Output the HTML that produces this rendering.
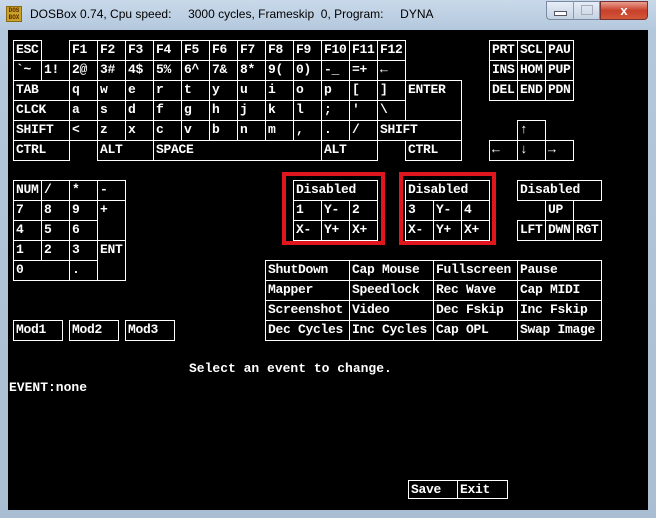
<!DOCTYPE html>
<html><head><meta charset="utf-8"><style>
body{margin:0;width:656px;height:518px;overflow:hidden;position:relative;background:linear-gradient(#c9d9ea,#b4c8dd 30px,#a9bdd3);font-family:"Liberation Sans",sans-serif}
#scr{position:absolute;left:8px;top:30px;width:640px;height:480px;background:#000}
.k{position:absolute;border:1px solid #fff;box-sizing:border-box;color:#fff;font:bold 13px "Liberation Mono",monospace;line-height:17px;padding-left:2px;white-space:nowrap;overflow:hidden;letter-spacing:-0.3px}
.t{position:absolute;color:#fff;font:bold 13px "Liberation Mono",monospace;white-space:pre}
.r{position:absolute;border:4px solid #e0161e;box-sizing:border-box}
.w1{width:29px;height:21px}.w2{width:57px;height:21px}.w3{width:85px;height:21px}
</style></head><body>
<div style="position:absolute;left:6px;top:6px;width:16px;height:16px;background:#c9a227;border:1px solid #8a6a10;box-sizing:border-box;font:bold 6px 'Liberation Mono';color:#5a2a00;line-height:7px;text-align:center">DOS<br>BOX</div>
<div style="position:absolute;left:30px;top:7px;font-size:12px;color:#000;white-space:pre">DOSBox 0.74, Cpu speed:     3000 cycles, Frameskip  0, Program:     DYNA</div>
<div style="position:absolute;left:546px;top:1px;width:54px;height:19px;border:1px solid #7a8aa0;border-radius:0 0 0 4px;background:linear-gradient(#e6eef7,#c4d2e2);box-sizing:border-box"></div>
<div style="position:absolute;left:573px;top:1px;width:1px;height:18px;background:#8a9ab0"></div>
<div style="position:absolute;left:554px;top:11px;width:11px;height:3px;background:#fff;border:1px solid #556"></div>
<div style="position:absolute;left:581px;top:5px;width:10px;height:8px;border:1px solid #aab"></div>
<div style="position:absolute;left:600px;top:1px;width:48px;height:19px;border:1px solid #7a3030;border-radius:0 0 4px 0;background:linear-gradient(#e8a090,#c8402a 50%,#d05838);box-sizing:border-box;color:#fff;font:bold 13px 'Liberation Sans';text-align:center;line-height:17px">x</div>
<div id="scr"></div>

<!-- row0 -->
<div class="k w1" style="left:13px;top:40px">ESC</div>
<div class="k w1" style="left:69px;top:40px">F1</div>
<div class="k w1" style="left:97px;top:40px">F2</div>
<div class="k w1" style="left:125px;top:40px">F3</div>
<div class="k w1" style="left:153px;top:40px">F4</div>
<div class="k w1" style="left:181px;top:40px">F5</div>
<div class="k w1" style="left:209px;top:40px">F6</div>
<div class="k w1" style="left:237px;top:40px">F7</div>
<div class="k w1" style="left:265px;top:40px">F8</div>
<div class="k w1" style="left:293px;top:40px">F9</div>
<div class="k w1" style="left:321px;top:40px">F10</div>
<div class="k w1" style="left:349px;top:40px">F11</div>
<div class="k w1" style="left:377px;top:40px">F12</div>
<!-- row1 -->
<div class="k w1" style="left:13px;top:60px">`~</div>
<div class="k w1" style="left:41px;top:60px">1!</div>
<div class="k w1" style="left:69px;top:60px">2@</div>
<div class="k w1" style="left:97px;top:60px">3#</div>
<div class="k w1" style="left:125px;top:60px">4$</div>
<div class="k w1" style="left:153px;top:60px">5%</div>
<div class="k w1" style="left:181px;top:60px">6^</div>
<div class="k w1" style="left:209px;top:60px">7&amp;</div>
<div class="k w1" style="left:237px;top:60px">8*</div>
<div class="k w1" style="left:265px;top:60px">9(</div>
<div class="k w1" style="left:293px;top:60px">0)</div>
<div class="k w1" style="left:321px;top:60px">-_</div>
<div class="k w1" style="left:349px;top:60px">=+</div>
<div class="k w1" style="left:377px;top:60px">←</div>
<!-- row2 -->
<div class="k w2" style="left:13px;top:80px">TAB</div>
<div class="k w1" style="left:69px;top:80px">q</div>
<div class="k w1" style="left:97px;top:80px">w</div>
<div class="k w1" style="left:125px;top:80px">e</div>
<div class="k w1" style="left:153px;top:80px">r</div>
<div class="k w1" style="left:181px;top:80px">t</div>
<div class="k w1" style="left:209px;top:80px">y</div>
<div class="k w1" style="left:237px;top:80px">u</div>
<div class="k w1" style="left:265px;top:80px">i</div>
<div class="k w1" style="left:293px;top:80px">o</div>
<div class="k w1" style="left:321px;top:80px">p</div>
<div class="k w1" style="left:349px;top:80px">[</div>
<div class="k w1" style="left:377px;top:80px">]</div>
<div class="k" style="left:405px;top:80px;width:57px;height:41px">ENTER</div>
<!-- row3 -->
<div class="k w2" style="left:13px;top:100px">CLCK</div>
<div class="k w1" style="left:69px;top:100px">a</div>
<div class="k w1" style="left:97px;top:100px">s</div>
<div class="k w1" style="left:125px;top:100px">d</div>
<div class="k w1" style="left:153px;top:100px">f</div>
<div class="k w1" style="left:181px;top:100px">g</div>
<div class="k w1" style="left:209px;top:100px">h</div>
<div class="k w1" style="left:237px;top:100px">j</div>
<div class="k w1" style="left:265px;top:100px">k</div>
<div class="k w1" style="left:293px;top:100px">l</div>
<div class="k w1" style="left:321px;top:100px">;</div>
<div class="k w1" style="left:349px;top:100px">'</div>
<div class="k w1" style="left:377px;top:100px">\</div>
<!-- row4 -->
<div class="k w2" style="left:13px;top:120px">SHIFT</div>
<div class="k w1" style="left:69px;top:120px">&lt;</div>
<div class="k w1" style="left:97px;top:120px">z</div>
<div class="k w1" style="left:125px;top:120px">x</div>
<div class="k w1" style="left:153px;top:120px">c</div>
<div class="k w1" style="left:181px;top:120px">v</div>
<div class="k w1" style="left:209px;top:120px">b</div>
<div class="k w1" style="left:237px;top:120px">n</div>
<div class="k w1" style="left:265px;top:120px">m</div>
<div class="k w1" style="left:293px;top:120px">,</div>
<div class="k w1" style="left:321px;top:120px">.</div>
<div class="k w1" style="left:349px;top:120px">/</div>
<div class="k w3" style="left:377px;top:120px">SHIFT</div>
<!-- row5 -->
<div class="k w2" style="left:13px;top:140px">CTRL</div>
<div class="k w2" style="left:97px;top:140px">ALT</div>
<div class="k" style="left:153px;top:140px;width:169px;height:21px">SPACE</div>
<div class="k w2" style="left:321px;top:140px">ALT</div>
<div class="k w2" style="left:405px;top:140px">CTRL</div>
<!-- right cluster -->
<div class="k w1" style="left:489px;top:40px">PRT</div>
<div class="k w1" style="left:517px;top:40px">SCL</div>
<div class="k w1" style="left:545px;top:40px">PAU</div>
<div class="k w1" style="left:489px;top:60px">INS</div>
<div class="k w1" style="left:517px;top:60px">HOM</div>
<div class="k w1" style="left:545px;top:60px">PUP</div>
<div class="k w1" style="left:489px;top:80px">DEL</div>
<div class="k w1" style="left:517px;top:80px">END</div>
<div class="k w1" style="left:545px;top:80px">PDN</div>
<div class="k w1" style="left:517px;top:120px">↑</div>
<div class="k w1" style="left:489px;top:140px">←</div>
<div class="k w1" style="left:517px;top:140px">↓</div>
<div class="k w1" style="left:545px;top:140px">→</div>
<!-- numpad -->
<div class="k w1" style="left:13px;top:180px">NUM</div>
<div class="k w1" style="left:41px;top:180px">/</div>
<div class="k w1" style="left:69px;top:180px">*</div>
<div class="k w1" style="left:97px;top:180px">-</div>
<div class="k w1" style="left:13px;top:200px">7</div>
<div class="k w1" style="left:41px;top:200px">8</div>
<div class="k w1" style="left:69px;top:200px">9</div>
<div class="k" style="left:97px;top:200px;width:29px;height:41px">+</div>
<div class="k w1" style="left:13px;top:220px">4</div>
<div class="k w1" style="left:41px;top:220px">5</div>
<div class="k w1" style="left:69px;top:220px">6</div>
<div class="k w1" style="left:13px;top:240px">1</div>
<div class="k w1" style="left:41px;top:240px">2</div>
<div class="k w1" style="left:69px;top:240px">3</div>
<div class="k" style="left:97px;top:240px;width:29px;height:41px">ENT</div>
<div class="k w2" style="left:13px;top:260px">0</div>
<div class="k w1" style="left:69px;top:260px">.</div>
<!-- joysticks -->
<div class="r" style="left:282px;top:172px;width:103px;height:73px"></div>
<div class="k w3" style="left:293px;top:180px">Disabled</div>
<div class="k w1" style="left:293px;top:200px">1</div>
<div class="k w1" style="left:321px;top:200px">Y-</div>
<div class="k w1" style="left:349px;top:200px">2</div>
<div class="k w1" style="left:293px;top:220px">X-</div>
<div class="k w1" style="left:321px;top:220px">Y+</div>
<div class="k w1" style="left:349px;top:220px">X+</div>
<div class="r" style="left:399px;top:172px;width:97px;height:73px"></div>
<div class="k w3" style="left:405px;top:180px">Disabled</div>
<div class="k w1" style="left:405px;top:200px">3</div>
<div class="k w1" style="left:433px;top:200px">Y-</div>
<div class="k w1" style="left:461px;top:200px">4</div>
<div class="k w1" style="left:405px;top:220px">X-</div>
<div class="k w1" style="left:433px;top:220px">Y+</div>
<div class="k w1" style="left:461px;top:220px">X+</div>
<div class="k w3" style="left:517px;top:180px">Disabled</div>
<div class="k w1" style="left:545px;top:200px">UP</div>
<div class="k w1" style="left:517px;top:220px">LFT</div>
<div class="k w1" style="left:545px;top:220px">DWN</div>
<div class="k w1" style="left:573px;top:220px">RGT</div>
<!-- events -->
<div class="k w3" style="left:265px;top:260px">ShutDown</div>
<div class="k w3" style="left:349px;top:260px">Cap Mouse</div>
<div class="k w3" style="left:433px;top:260px">Fullscreen</div>
<div class="k w3" style="left:517px;top:260px">Pause</div>
<div class="k w3" style="left:265px;top:280px">Mapper</div>
<div class="k w3" style="left:349px;top:280px">Speedlock</div>
<div class="k w3" style="left:433px;top:280px">Rec Wave</div>
<div class="k w3" style="left:517px;top:280px">Cap MIDI</div>
<div class="k w3" style="left:265px;top:300px">Screenshot</div>
<div class="k w3" style="left:349px;top:300px">Video</div>
<div class="k w3" style="left:433px;top:300px">Dec Fskip</div>
<div class="k w3" style="left:517px;top:300px">Inc Fskip</div>
<div class="k w3" style="left:265px;top:320px">Dec Cycles</div>
<div class="k w3" style="left:349px;top:320px">Inc Cycles</div>
<div class="k w3" style="left:433px;top:320px">Cap OPL</div>
<div class="k w3" style="left:517px;top:320px">Swap Image</div>
<div class="k" style="left:13px;top:320px;width:50px;height:21px">Mod1</div>
<div class="k" style="left:69px;top:320px;width:50px;height:21px">Mod2</div>
<div class="k" style="left:125px;top:320px;width:50px;height:21px">Mod3</div>
<div class="t" style="left:189px;top:361px">Select an event to change.</div>
<div class="t" style="left:9px;top:380px">EVENT:none</div>
<div class="k" style="left:408px;top:480px;width:50px;height:19px">Save</div>
<div class="k" style="left:457px;top:480px;width:51px;height:19px">Exit</div>
</body></html>
